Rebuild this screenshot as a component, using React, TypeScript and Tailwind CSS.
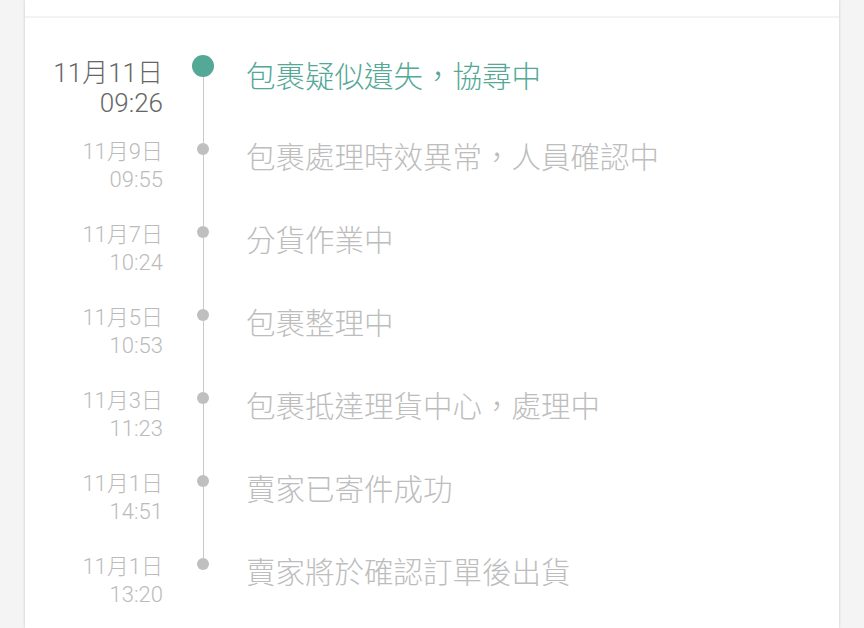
const events = [
  { date: "11月11日", time: "09:26", title: "包裹疑似遺失，協尋中" },
  { date: "11月9日", time: "09:55", title: "包裹處理時效異常，人員確認中" },
  { date: "11月7日", time: "10:24", title: "分貨作業中" },
  { date: "11月5日", time: "10:53", title: "包裹整理中" },
  { date: "11月3日", time: "11:23", title: "包裹抵達理貨中心，處理中" },
  { date: "11月1日", time: "14:51", title: "賣家已寄件成功" },
  { date: "11月1日", time: "13:20", title: "賣家將於確認訂單後出貨" },
]

const dateFont = { fontFamily: 'Roboto, "Noto Sans CJK TC", sans-serif' }
const titleFont = { fontFamily: '"Noto Sans CJK TC", "Noto Sans", sans-serif' }

export default function App() {
  return (
    <div className="w-[864px] h-[628px] overflow-hidden bg-[#f4f4f4]">
      <div className="ml-[25px] w-[814px] h-full bg-white shadow-[0_0_3px_rgba(0,0,0,0.18)]">
        <div className="h-[16px]" />
        <div className="h-[2px] bg-[#f3f3f3]" />
        <div className="pt-[36px]">
          {events.map((e, i) => {
            const first = i === 0
            const last = i === events.length - 1
            return (
              <div key={i} className="flex h-[83px]">
                <div
                  className={`w-[138px] text-right font-light ${
                    first
                      ? "pt-[4px] text-[26px] leading-[30px] text-[#666666]"
                      : "pt-[1px] text-[22px] leading-[28px] text-[#bbbbbb]"
                  }`}
                  style={dateFont}
                >
                  <div>{e.date}</div>
                  <div>{e.time}</div>
                </div>
                <div className="ml-[29px] w-[22px] flex flex-col items-center">
                  <div className={`w-px ${first ? "h-[1px]" : "h-[6px] bg-[#c9c9c9]"}`} />
                  {first ? (
                    <div className="w-[22px] h-[22px] rounded-full bg-[#53a896]" />
                  ) : (
                    <div className="w-[12px] h-[12px] rounded-full bg-[#bfbfbf]" />
                  )}
                  <div className={`w-px flex-1 ${last ? "" : "bg-[#c9c9c9]"}`} />
                </div>
                <div
                  className={`ml-[32px] text-[29.5px] leading-[36px] font-light ${
                    first ? "pt-[2px] text-[#53a896]" : "text-[#bdbdbd]"
                  }`}
                  style={titleFont}
                >
                  {e.title}
                </div>
              </div>
            )
          })}
        </div>
      </div>
    </div>
  )
}
